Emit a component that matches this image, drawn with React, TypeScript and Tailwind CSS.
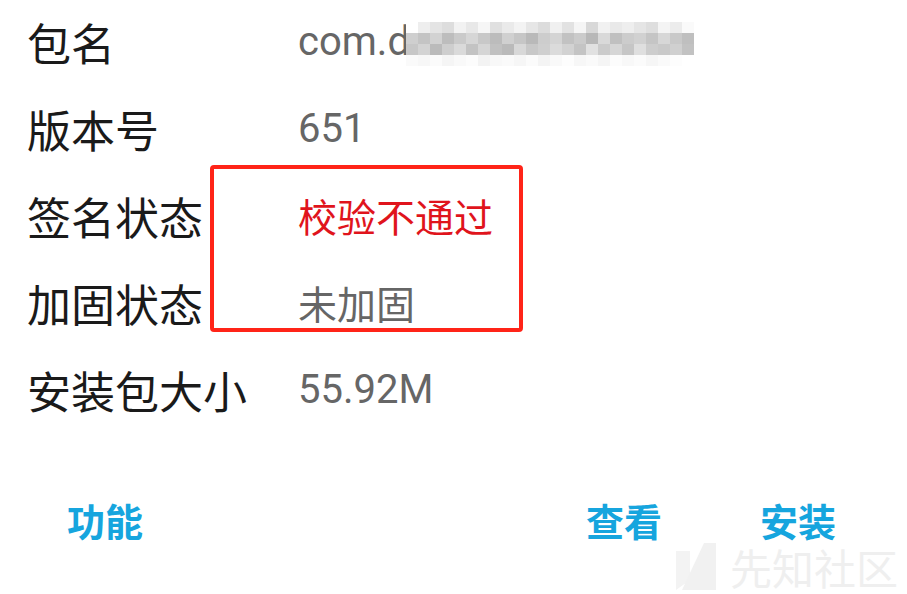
import React from 'react'

const cjk = '"Noto Sans CJK SC", "Noto Sans", sans-serif'
const latin = 'Roboto, "Noto Sans CJK SC", sans-serif'

// pixelated mosaic over the package name
const mosaic: string[][] = [
  ['#fff', '#eee', '#e4e4e4', '#ddd', '#f2f2f2', '#e8e8e8', '#f6f6f6', '#e0e0e0', '#eaeaea', '#f3f3f3', '#e6e6e6', '#dcdcdc', '#f0f0f0', '#e2e2e2', '#f5f5f5', '#d8d8d8', '#f1f1f1', '#e9e9e9', '#eeeeee', '#e5e5e5', '#dedede', '#f4f4f4', '#ececec', '#fafafa'],
  ['#cfcfcf', '#c4c4c4', '#d2d2d2', '#bdbdbd', '#cacaca', '#d6d6d6', '#c8c8c8', '#bcbcbc', '#d0d0d0', '#c6c6c6', '#b9b9b9', '#cdcdcd', '#d4d4d4', '#c2c2c2', '#cbcbcb', '#b8b8b8', '#d9d9d9', '#c0c0c0', '#cccccc', '#d1d1d1', '#c5c5c5', '#d7d7d7', '#c9c9c9', '#bfbfbf'],
  ['#c7c7c7', '#d3d3d3', '#bbbbbb', '#cecece', '#dadada', '#c3c3c3', '#d5d5d5', '#c1c1c1', '#bababa', '#d8d8d8', '#c8c8c8', '#cfcfcf', '#dbdbdb', '#d2d2d2', '#c4c4c4', '#e1e1e1', '#cbcbcb', '#d6d6d6', '#c6c6c6', '#dfdfdf', '#cdcdcd', '#c9c9c9', '#d0d0d0', '#c2c2c2'],
  ['#fafafa', '#f7f7f7', '#fbfbfb', '#f5f5f5', '#f9f9f9', '#fcfcfc', '#f3f3f3', '#f8f8f8', '#fafafa', '#f6f6f6', '#fbfbfb', '#f4f4f4', '#f9f9f9', '#fdfdfd', '#f7f7f7', '#fafafa', '#f5f5f5', '#fcfcfc', '#f8f8f8', '#fbfbfb', '#f6f6f6', '#fafafa', '#fdfdfd', '#fff'],
]

function Row({ label, children }: { label: string; children: React.ReactNode }) {
  return (
    <div className="flex items-center h-[87px]">
      <span className="w-[271px] ml-[27px] shrink-0 text-[44px] leading-none text-[#1a1a1a]" style={{ fontFamily: cjk }}>
        {label}
      </span>
      {children}
    </div>
  )
}

export default function App() {
  return (
    <div className="relative w-[907px] h-[594px] bg-white overflow-hidden">
      <div className="flex flex-col -mt-[2px]">
        <Row label="包名">
          <div className="flex items-center">
            <span className="text-[40px] leading-none text-[#666]" style={{ fontFamily: latin }}>com.d</span>
            <div className="flex flex-col -ml-[4px] mt-[4px]">
              {mosaic.map((row, r) => (
                <div key={r} className="flex">
                  {row.map((c, i) => (
                    <span key={i} className="block w-[12px] h-[11px]" style={{ backgroundColor: c }} />
                  ))}
                </div>
              ))}
            </div>
          </div>
        </Row>
        <Row label="版本号">
          <span className="text-[40px] leading-none text-[#666]" style={{ fontFamily: latin }}>651</span>
        </Row>
        <Row label="签名状态">
          <span className="text-[39px] leading-none text-[#e0141c]" style={{ fontFamily: cjk }}>校验不通过</span>
        </Row>
        <Row label="加固状态">
          <span className="text-[39px] leading-none text-[#666]" style={{ fontFamily: cjk }}>未加固</span>
        </Row>
        <Row label="安装包大小">
          <span className="text-[40px] leading-none text-[#666]" style={{ fontFamily: latin }}>55.92M</span>
        </Row>
      </div>

      {/* action buttons */}
      <div className="flex items-center h-[44px] mt-[65px] text-[38px] font-bold leading-none text-[#16a5de]" style={{ fontFamily: cjk }}>
        <span className="ml-[67px]">功能</span>
        <span className="ml-auto">查看</span>
        <span className="ml-[98px] mr-[71px]">安装</span>
      </div>

      {/* watermark */}
      <div className="absolute left-[674px] top-[543px] flex items-center gap-[14px] pointer-events-none">
        <svg width="42" height="47" viewBox="0 0 42 47">
          <polygon points="2,8 16,8 16,37 2,47" fill="#f3f3f3" />
          <polygon points="30,0 42,0 42,47 8,47" fill="#f1f1f1" />
        </svg>
        <span className="text-[42px] leading-none text-[#efefef]" style={{ fontFamily: cjk }}>先知社区</span>
      </div>

      {/* annotation box */}
      <div className="absolute left-[210px] top-[165px] w-[313px] h-[167px] border-[4px] border-[#ff2418] rounded-[4px]" />
    </div>
  )
}
